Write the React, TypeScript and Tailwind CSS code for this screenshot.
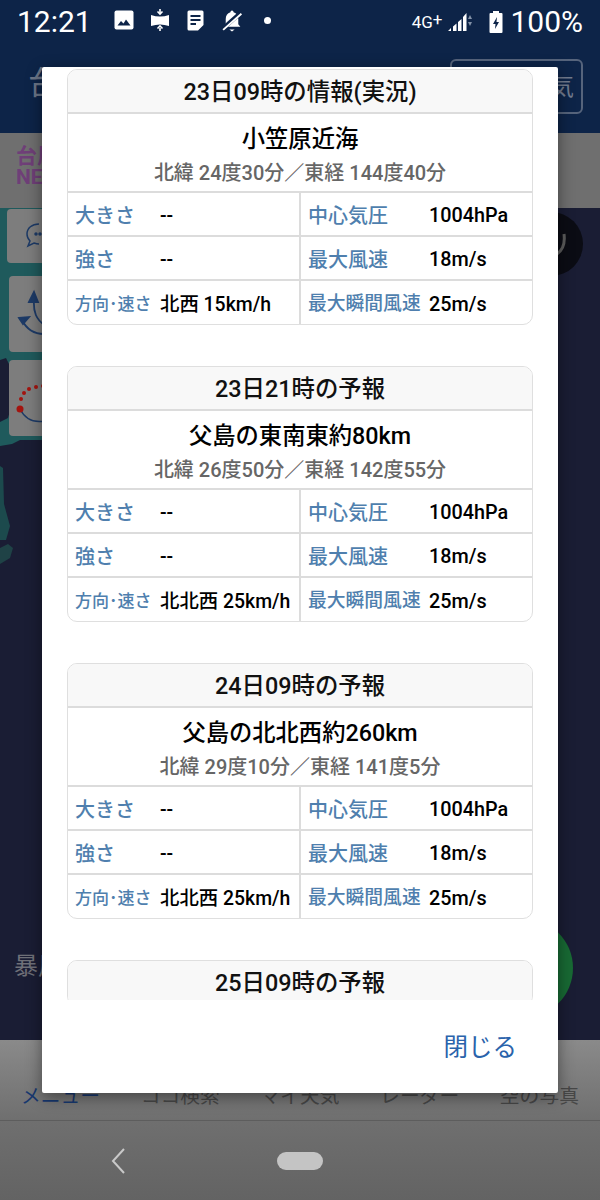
import React from "react";

const reports = [
  {
    title: "23日09時の情報(実況)",
    place: "小笠原近海",
    coords: "北緯 24度30分／東経 144度40分",
    move: "北西 15km/h",
  },
  {
    title: "23日21時の予報",
    place: "父島の東南東約80km",
    coords: "北緯 26度50分／東経 142度55分",
    move: "北北西 25km/h",
  },
  {
    title: "24日09時の予報",
    place: "父島の北北西約260km",
    coords: "北緯 29度10分／東経 141度5分",
    move: "北北西 25km/h",
  },
];

const tabs = ["メニュー", "ココ検索", "マイ天気", "レーダー", "空の写真"];

function Row({
  label,
  value,
  label2,
  value2,
  small,
  last,
}: {
  label: string;
  value: string;
  label2: string;
  value2: string;
  small?: boolean;
  last?: boolean;
}) {
  const border = last ? "h-[43px]" : "h-[44px] border-b-2 border-[#dcdcdc]";
  return (
    <div className={`flex ${border}`}>
      <div className="flex w-[233px] items-center border-r-2 border-[#dcdcdc] pt-[4px] pl-[7px]">
        <span className={`w-[85px] whitespace-nowrap font-medium text-[#4f7fae] ${small ? "text-[17px]" : "text-[20px]"}`}>
          {label}
        </span>
        <span className="whitespace-nowrap text-[19.4px] font-medium text-black">{value}</span>
      </div>
      <div className="flex flex-1 items-center pt-[4px] pl-[7px]">
        <span className={`w-[121px] whitespace-nowrap font-medium text-[#4f7fae] ${small ? "text-[18.8px]" : "text-[20px]"}`}>
          {label2}
        </span>
        <span className="whitespace-nowrap text-[19.8px] font-medium text-black">{value2}</span>
      </div>
    </div>
  );
}

function ReportCard({ title, place, coords, move }: { title: string; place?: string; coords?: string; move?: string }) {
  return (
    <div className="overflow-hidden rounded-[10px] border border-[#dfdfdf] bg-white">
      <div className="flex h-[44px] items-center justify-center border-b-2 border-[#dcdcdc] bg-[#f8f8f8] pt-[4px] text-[23.4px] font-medium text-[#111]">
        {title}
      </div>
      {place && (
        <>
          <div className="flex h-[79px] flex-col items-center border-b-2 border-[#dcdcdc] pt-[7px]">
            <div className="text-[23.3px] leading-[36px] font-medium text-black">{place}</div>
            <div className="pt-[3px] text-[20px] leading-[26px] font-medium whitespace-nowrap text-[#666]">{coords}</div>
          </div>
          <Row label="大きさ" value="--" label2="中心気圧" value2="1004hPa" />
          <Row label="強さ" value="--" label2="最大風速" value2="18m/s" />
          <Row label="方向･速さ" value={move ?? ""} label2="最大瞬間風速" value2="25m/s" small last />
        </>
      )}
    </div>
  );
}

function StatusIcons() {
  return (
    <div className="-mt-[4px] ml-[22px] flex items-center gap-[17px]">
      <svg width="20" height="20" viewBox="0 0 20 20">
        <rect x="0.5" y="0.5" width="19" height="19" rx="2" fill="#fff" />
        <path d="M3.5 15.5l3.5-4.5 2.5 2.5 2.5-4 4.5 6z" fill="#0d2448" />
      </svg>
      <svg width="20" height="24" viewBox="0 0 20 24" className="-ml-[1px]">
        <path d="M1 7q9 3 18 0v11q-9-3-18 0z" fill="#fff" />
        <path d="M10 1v3.5M7.5 3.5l2.5 2.5 2.5-2.5M10 23v-3M7.5 20.500l2.500-2.500 2.500 2.500" stroke="#fff" strokeWidth="1.600" fill="none" />
      </svg>
      <svg width="17" height="21" viewBox="0 0 17 21">
        <path d="M2 0.500h13a1.500 1.500 0 0 1 1.500 1.500v13l-5.500 5.500h-9a1.500 1.500 0 0 1-1.500-1.500v-17a1.500 1.500 0 0 1 1.500-1.500z" fill="#fff" />
        <path d="M3.500 6h10M3.500 10h10M3.500 14h5.500" stroke="#0d2448" strokeWidth="1.800" />
      </svg>
      <svg width="22" height="23" viewBox="0 0 20 22">
        <path d="M10 1.500a1.500 1.500 0 0 1 1.500 1.500c3 1 4.500 3.500 4.500 6.500v5l2 2.500h-16l2-2.500v-5c0-3 1.500-5.500 4.500-6.500a1.500 1.500 0 0 1 1.500-1.500z" fill="#fff" />
        <path d="M7.500 19.500h5l-2.500 2z" fill="#fff" />
        <path d="M19 3L1 19" stroke="#0d2448" strokeWidth="4" />
        <path d="M19 4.500L1.500 20" stroke="#fff" strokeWidth="1.800" />
      </svg>
      <span className="ml-[4px] size-[7px] rounded-full bg-white" />
    </div>
  );
}

function SignalIcons() {
  return (
    <div className="flex items-center">
      <span className="text-[17px] leading-none text-white">4G<span className="relative -top-[3px]">+</span></span>
      <svg width="27" height="22" viewBox="0 0 27 22" className="ml-[5px]">
        <path d="M1 20h3v-3zM6 20h3.500v-7.500l-3.500 3zM11 20h3.500v-12l-3.500 3zM16 20h3.500v-18l-3.500 4z" fill="#fff" />
        <path d="M21 8l2-4 2 4zM21 11l2 4 2-4z" fill="#8392a8" />
      </svg>
      <svg width="14" height="24" viewBox="0 0 14 24" className="ml-[15px]">
        <path d="M4 1h6v2h2.500a1 1 0 0 1 1 1v18a1 1 0 0 1-1 1h-11a1 1 0 0 1-1-1v-18a1 1 0 0 1 1-1h2.500z" fill="#fff" />
        <path d="M8 7l-4 7h2.500l-.5 5 4-7h-2.500z" fill="#0d2448" />
      </svg>
      <span className="ml-[7px] text-[30px] leading-none text-white">100%</span>
    </div>
  );
}

function MapBackdrop() {
  return (
    <svg width="60" height="830" viewBox="0 0 60 830" className="absolute top-0 left-0">
      <path d="M0 0h60v232h-40l-8 4-12 2z" fill="#1f5a5c" />
      <path d="M0 152l6-2 5 10 2 10-4 12 3 14-4 14-8 4z" fill="#1a1d34" />
      <path d="M0 258l3 2 1 36 6 22-4 14h-6z" fill="#1c4a4d" />
      <path d="M0 340l8-4 5 4-3 10-10 6z" fill="#1f4246" />
    </svg>
  );
}

function ToolButtons() {
  return (
    <div className="absolute top-[1px] left-[7px] flex flex-col">
      <div className="flex h-[54px] w-[60px] items-center rounded-[4px] bg-[#7d7d7d] pl-[18px]">
        <svg width="30" height="30" viewBox="0 0 30 30" fill="none" stroke="#1d3a66" strokeWidth="1.500">
          <path d="M14 3c-7 0-12 4-12 10 0 3 1 5 3 7l-2 5 6-3c2 .7 3 1 5 1" />
          <circle cx="11" cy="13" r="1" fill="#1d3a66" />
          <circle cx="15" cy="13" r="1" fill="#1d3a66" />
        </svg>
      </div>
      <div className="mt-[13px] ml-[2px] flex h-[76px] w-[60px] rounded-[4px] bg-[#7d7d7d]">
        <svg width="36" height="76" viewBox="0 0 36 76" fill="none" stroke="#1d3a66" strokeWidth="1.800">
          <path d="M25 22c-1 14 2 22 12 28" />
          <path d="M20 26l5-10 4 10z" fill="#1d3a66" />
          <path d="M13 44c5 10 12 14 22 14" />
          <path d="M10 42l10-1-6 7z" fill="#1d3a66" />
        </svg>
      </div>
      <div className="mt-[8px] ml-[2px] flex h-[76px] w-[60px] rounded-[4px] bg-[#7d7d7d]">
        <svg width="36" height="76" viewBox="0 0 36 76" fill="none">
          <path d="M11 49c5 10 14 14 25 12" stroke="#1d3a66" strokeWidth="1.500" />
          <circle cx="11" cy="49" r="3.500" fill="#a3140f" />
          <circle cx="12" cy="39" r="2" fill="#a3140f" />
          <circle cx="15" cy="33" r="2" fill="#a3140f" />
          <circle cx="20" cy="29" r="2" fill="#a3140f" />
          <circle cx="27" cy="27" r="2" fill="#a3140f" />
          <circle cx="34" cy="26" r="2" fill="#a3140f" />
        </svg>
      </div>
    </div>
  );
}

export default function App() {
  return (
    <div className="relative h-[1200px] w-[600px] overflow-hidden font-[Roboto,'Noto_Sans_CJK_JP',sans-serif]">
      <div className="flex h-full flex-col">
        <div className="h-[133px] bg-[#0d2448]">
          <div className="flex h-[44px] items-center justify-between pr-[17px] pl-[17px]">
            <div className="flex items-center">
              <span className="text-[30px] leading-none text-white">12:21</span>
              <StatusIcons />
            </div>
            <SignalIcons />
          </div>
          <div className="flex items-start justify-between pt-[15px] pr-[17px] pl-[28px]">
            <span className="pt-[8px] text-[32px] leading-none text-[#6c7688]">台</span>
            <div className="flex h-[55px] w-[133px] items-center justify-end rounded-[6px] border-2 border-[#56647c] pr-[7px] text-[24px] text-[#717b8e]">
              気
            </div>
          </div>
        </div>
        <div className="flex h-[75px] items-center bg-[#6f6f6f] pb-[8px] pl-[16px]">
          <div className="text-[21px] leading-[21px] font-bold whitespace-nowrap text-[#6f3f78]">
            台風
            <br />
            NEWS
          </div>
        </div>
        <div className="relative flex-1 bg-[#1a1d34]">
          <MapBackdrop />
          <ToolButtons />
          <div className="absolute top-[4px] right-[17px] flex size-[64px] items-center justify-end rounded-full bg-[#0b0c14] pr-[17px]">
            <svg width="10" height="24" viewBox="0 0 10 24" fill="none" stroke="#5c5c5c" strokeWidth="3">
              <path d="M8 2c1 8-1 16-7 20" />
            </svg>
          </div>
          <div className="absolute top-[710px] right-[27px] size-[100px] rounded-full bg-[#186a34]" />
          <span className="absolute top-[746px] left-[14px] text-[24px] leading-none text-[#6f7078]">暴風</span>
        </div>
        <div className="flex h-[80px] items-end justify-between bg-linear-to-b from-[#8a8a8a] to-[#6f6f6f] px-[21px] pb-[11px]">
          {tabs.map((tab, i) => (
            <span key={tab} className={`text-[19.8px] leading-[24px] ${i === 0 ? "text-[#17386f]" : "text-[#474747]"}`}>
              {tab}
            </span>
          ))}
        </div>
        <div className="flex h-[80px] items-center border-t border-[#5d5d5d] bg-linear-to-b from-[#6f6f6f] to-[#636363] pl-[110px]">
          <svg width="16" height="26" viewBox="0 0 16 26" fill="none" stroke="#c9c9c9" strokeWidth="2">
            <path d="M14 1L3 13l11 12" />
          </svg>
          <div className="ml-[151px] h-[18px] w-[46px] rounded-full bg-[#c4c4c4]" />
        </div>
      </div>

      {/* dialog */}
      <div className="absolute top-[67px] left-[42px] flex h-[1026px] w-[516px] flex-col rounded-[2px] bg-white shadow-[0_4px_16px_rgba(0,0,0,0.45)]">
        <div className="h-[933px] overflow-hidden px-[25px] pt-[2px]">
          <div className="flex flex-col gap-[41px]">
            {reports.map((r) => (
              <ReportCard key={r.title} {...r} />
            ))}
            <ReportCard title="25日09時の予報" />
          </div>
        </div>
        <div className="flex flex-1 justify-end pt-[30px] pr-[41px]">
          <span className="text-[24.500px] leading-[36px] text-[#2a63ab]">閉じる</span>
        </div>
      </div>
    </div>
  );
}
